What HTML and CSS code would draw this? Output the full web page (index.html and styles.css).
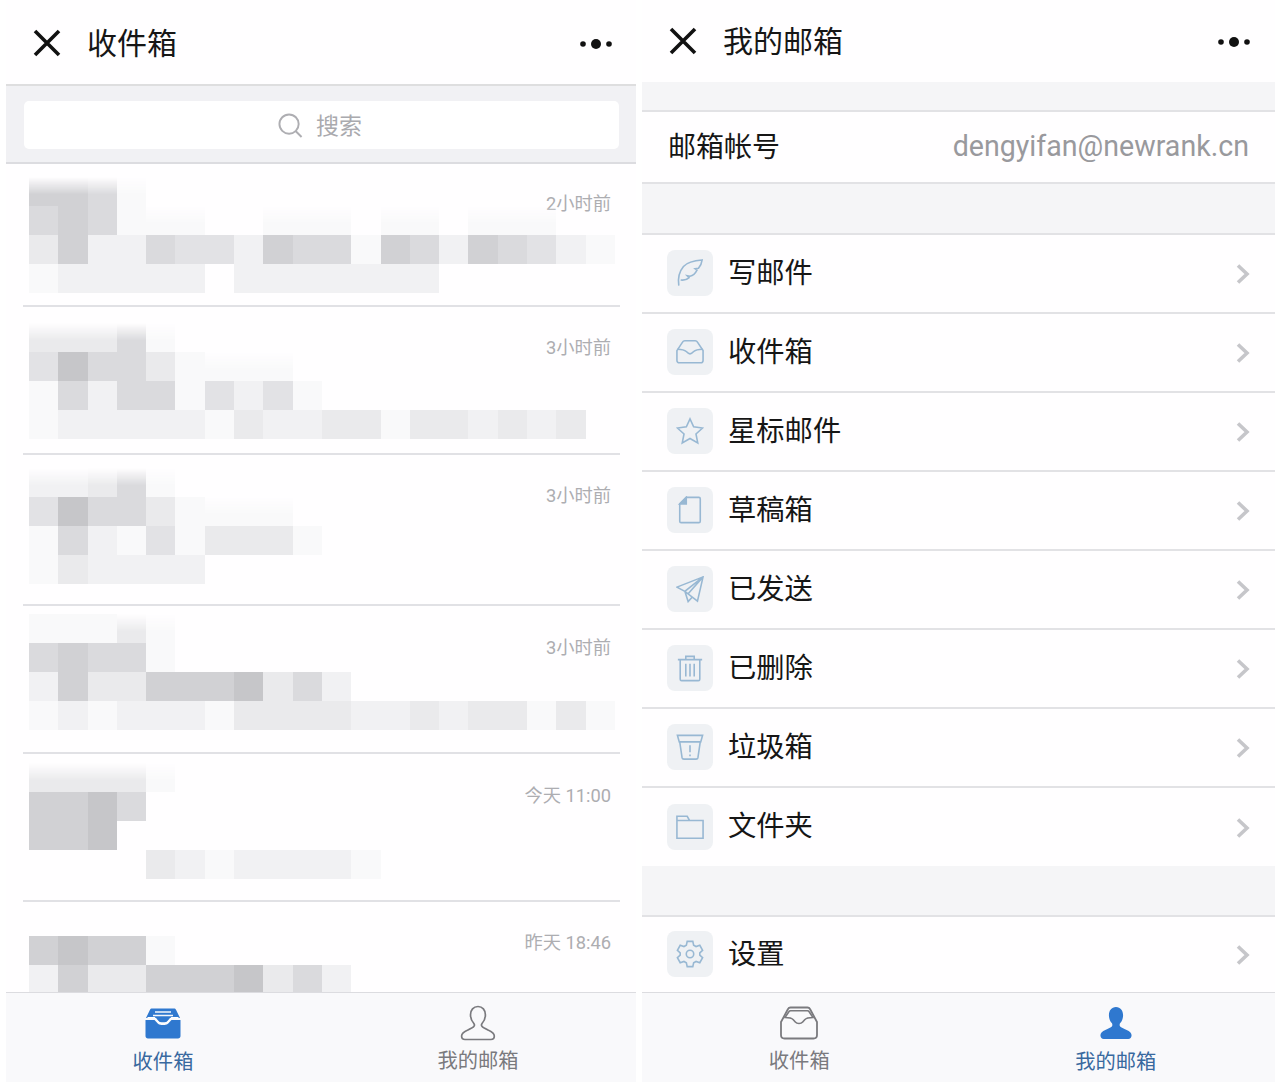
FILE: index.html
```html
<!DOCTYPE html>
<html lang="zh-CN">
<head>
<meta charset="utf-8">
<title>邮箱</title>
<link rel="stylesheet" href="styles.css">
</head>
<body>
<svg class="defs" width="0" height="0" aria-hidden="true">
  <symbol id="close" viewBox="0 0 28 28"><path d="M2 2 26 26M26 2 2 26" fill="none" stroke="currentColor" stroke-width="3.600"/></symbol>
  <symbol id="dots" viewBox="0 0 32 12"><circle cx="3" cy="6" r="2.800"/><circle cx="16" cy="6" r="5"/><circle cx="29" cy="6" r="2.800"/></symbol>
  <symbol id="chev" viewBox="0 0 14 20"><path d="M2 1.500 11 10 2 18.500" fill="none" stroke="#c6c6ca" stroke-width="3.600"/></symbol>
  <symbol id="person-line" viewBox="0 0 36 36"><path d="M18 1.500c-4.600 0-7.500 3.600-7.500 8.300 0 3.400 1.300 6.300 3.200 8.400.8 1 .9 2.400.1 3.300-.8 1-3.600 2.300-6.500 3.700-3.300 1.500-5.700 3-5.700 5.800 0 2.200 1.300 3.500 3.400 3.500h25.900c2.100 0 3.400-1.300 3.400-3.500 0-2.800-2.400-4.300-5.700-5.800-2.900-1.400-5.700-2.700-6.500-3.700-.8-.9-.7-2.300.1-3.300 1.900-2.100 3.200-5 3.200-8.400 0-4.700-2.900-8.300-7.400-8.300z" fill="none" stroke="currentColor" stroke-width="1.700"/></symbol>
  <symbol id="person-fill" viewBox="0 0 36 36"><path d="M18 1c-4.800 0-7.500 3.800-7.500 8.800 0 3.400 1.200 6.300 3 8.300.8 1 .9 2.700.1 3.600-.8 1-3.800 2.300-6.900 3.700C3.500 26.900 1.500 28.600 1.500 31c0 2.400 1.500 4 3.500 4h26c2 0 3.500-1.600 3.500-4 0-2.400-2-4.100-5.200-5.600-3.100-1.400-6.100-2.700-6.900-3.700-.8-.9-.7-2.600.1-3.600 1.800-2 3-4.900 3-8.300C25.500 4.800 22.800 1 18 1z" fill="currentColor"/></symbol>
  <symbol id="inbox-line" viewBox="0 0 40 34"><path d="M2 16 9 3c.5-1 1.300-1.500 2.500-1.500h17c1.200 0 2 .5 2.500 1.500l7 13v13c0 2-1.300 3.500-3.500 3.500h-29C3.300 32.500 2 31 2 29z" fill="none" stroke="currentColor" stroke-width="1.800"/><path d="M6 11.500 10 5.500c.3-.5.8-.8 1.500-.8h17c.7 0 1.200.3 1.500.8l4 6c-3.700 0-6.800.5-8.300 2.200l-2 2.300c-.9 1-2.100 1.500-3.700 1.500s-2.800-.5-3.700-1.500l-2-2.300C12.800 12 9.700 11.500 6 11.500z" fill="none" stroke="currentColor" stroke-width="1.600"/></symbol>
  <symbol id="inbox-fill" viewBox="0 0 36 32"><path d="M7 1.500h22c1 0 1.600.4 2 1.200L35 11H25l-3 3.600c-.6.700-1.500 1-2.500 1h-3c-1 0-1.900-.3-2.500-1L11 11H1l4-8.300C5.400 1.900 6 1.500 7 1.500z" fill="currentColor"/><path d="M10 5h16M8 8.500h20" stroke="#f3f6fb" stroke-width="1.500"/><path d="M2.500 10.500h7l3 3.800c1 1.200 2.300 1.700 4 1.700h3c1.700 0 3-.5 4-1.700l3-3.800h7" fill="none" stroke="#fff" stroke-width="1.200"/><path d="M.5 13h9l3 3.300c1 1.100 2.300 1.700 4 1.700h3c1.700 0 3-.6 4-1.700l3-3.300h9v16c0 1.600-1 2.500-2.500 2.500H3C1.500 31.500.5 30.600.5 29z" fill="currentColor"/></symbol>
</svg>
<main class="screens">
  <section class="panel panel-inbox">
    <header class="top top-inbox">
      <svg class="close"><use href="#close"/></svg>
      <h1 class="title">收件箱</h1>
      <svg class="dots"><use href="#dots"/></svg>
    </header>
    <div class="searchband">
      <div class="searchbox">
        <svg class="searchicon" viewBox="0 0 26 26"><circle cx="11.500" cy="11.500" r="10" fill="none" stroke="#aeaeb2" stroke-width="2"/><path d="M18.500 19 24.500 25" stroke="#aeaeb2" stroke-width="2" fill="none"/></svg>
        <span class="searchtext">搜索</span>
      </div>
    </div>
    <div class="list">
      <article class="item i1">
        <div class="mosaic">
          <i class="s6 t"></i><i class="s6 t"></i><i class="s5 t"></i><i class="s1 t"></i><i></i><i></i><i></i><i></i><i></i><i></i><i></i><i></i><i></i><i></i><i></i><i></i><i></i><i></i><i></i><i></i>
          <i class="s5"></i><i class="s6"></i><i class="s5"></i><i class="s1"></i><i class="s1 t"></i><i class="s1 t"></i><i></i><i></i><i class="s1 t"></i><i class="s1 t"></i><i class="s1 t"></i><i></i><i class="s1 t"></i><i class="s1 t"></i><i></i><i class="s1 t"></i><i class="s1 t"></i><i class="s1 t"></i><i></i><i></i>
          <i class="s3"></i><i class="s6"></i><i class="s2"></i><i class="s2"></i><i class="s5"></i><i class="s4"></i><i class="s4"></i><i class="s2"></i><i class="s6"></i><i class="s5"></i><i class="s5"></i><i class="s1"></i><i class="s6"></i><i class="s5"></i><i class="s2"></i><i class="s6"></i><i class="s5"></i><i class="s4"></i><i class="s2"></i><i class="s1"></i>
          <i class="s1"></i><i class="s2"></i><i class="s2"></i><i class="s2"></i><i class="s2"></i><i class="s2"></i><i></i><i class="s2"></i><i class="s2"></i><i class="s2"></i><i class="s2"></i><i class="s2"></i><i class="s2"></i><i class="s2"></i>
        </div>
        <time class="time">2小时前</time>
      </article>
      <article class="item i2">
        <div class="mosaic">
          <i class="s3 t"></i><i class="s3 t"></i><i class="s3 t"></i><i class="s5 t"></i><i class="s1 t"></i><i></i><i></i><i></i><i></i><i></i><i></i><i></i><i></i><i></i><i></i><i></i><i></i><i></i><i></i><i></i>
          <i class="s4"></i><i class="s7"></i><i class="s5"></i><i class="s5"></i><i class="s3"></i><i class="s1"></i><i class="s1 t"></i><i class="s1 t"></i><i class="s1 t"></i><i></i><i></i><i></i><i></i><i></i><i></i><i></i><i></i><i></i><i></i><i></i>
          <i class="s1"></i><i class="s5"></i><i class="s2"></i><i class="s5"></i><i class="s5"></i><i class="s1"></i><i class="s4"></i><i class="s2"></i><i class="s4"></i><i class="s1"></i><i></i><i></i><i></i><i></i><i></i><i></i><i></i><i></i><i></i><i></i>
          <i class="s1"></i><i class="s2"></i><i class="s2"></i><i class="s2"></i><i class="s2"></i><i class="s2"></i><i class="s1"></i><i class="s3"></i><i class="s2"></i><i class="s2"></i><i class="s3"></i><i class="s3"></i><i class="s1"></i><i class="s3"></i><i class="s3"></i><i class="s2"></i><i class="s3"></i><i class="s2"></i><i class="s3"></i>
        </div>
        <time class="time">3小时前</time>
      </article>
      <article class="item i3">
        <div class="mosaic">
          <i class="s2 t"></i><i class="s2 t"></i><i class="s3 t"></i><i class="s5 t"></i><i class="s1 t"></i><i></i><i></i><i></i><i></i><i></i><i></i><i></i><i></i><i></i><i></i><i></i><i></i><i></i><i></i><i></i>
          <i class="s4"></i><i class="s7"></i><i class="s5"></i><i class="s5"></i><i class="s3"></i><i class="s1"></i><i class="s1 t"></i><i class="s1 t"></i><i class="s1 t"></i><i></i><i></i><i></i><i></i><i></i><i></i><i></i><i></i><i></i><i></i><i></i>
          <i class="s1"></i><i class="s5"></i><i class="s2"></i><i class="s1"></i><i class="s4"></i><i class="s1"></i><i class="s3"></i><i class="s3"></i><i class="s3"></i><i class="s1"></i><i></i><i></i><i></i><i></i><i></i><i></i><i></i><i></i><i></i><i></i>
          <i class="s1"></i><i class="s3"></i><i class="s2"></i><i class="s2"></i><i class="s2"></i><i class="s2"></i>
        </div>
        <time class="time">3小时前</time>
      </article>
      <article class="item i4">
        <div class="mosaic">
          <i class="s1"></i><i class="s1"></i><i class="s1"></i><i class="s3 t"></i><i class="s1 t"></i><i></i><i></i><i></i><i></i><i></i><i></i><i></i><i></i><i></i><i></i><i></i><i></i><i></i><i></i><i></i>
          <i class="s5"></i><i class="s6"></i><i class="s5"></i><i class="s5"></i><i class="s1"></i><i></i><i></i><i></i><i></i><i></i><i></i><i></i><i></i><i></i><i></i><i></i><i></i><i></i><i></i><i></i>
          <i class="s2"></i><i class="s6"></i><i class="s3"></i><i class="s3"></i><i class="s6"></i><i class="s6"></i><i class="s6"></i><i class="s7"></i><i class="s3"></i><i class="s5"></i><i class="s2"></i><i></i><i></i><i></i><i></i><i></i><i></i><i></i><i></i><i></i>
          <i class="s1"></i><i class="s2"></i><i class="s1"></i><i class="s2"></i><i class="s2"></i><i class="s2"></i><i class="s1"></i><i class="s3"></i><i class="s3"></i><i class="s3"></i><i class="s3"></i><i class="s2"></i><i class="s2"></i><i class="s3"></i><i class="s2"></i><i class="s3"></i><i class="s3"></i><i class="s1"></i><i class="s3"></i><i class="s1"></i>
        </div>
        <time class="time">3小时前</time>
      </article>
      <article class="item i5">
        <div class="mosaic">
          <i class="s3 t"></i><i class="s3 t"></i><i class="s3 t"></i><i class="s3 t"></i><i class="s1 t"></i><i></i><i></i><i></i><i></i><i></i><i></i><i></i><i></i><i></i><i></i><i></i><i></i><i></i><i></i><i></i>
          <i class="s6"></i><i class="s6"></i><i class="s7"></i><i class="s5"></i><i></i><i></i><i></i><i></i><i></i><i></i><i></i><i></i><i></i><i></i><i></i><i></i><i></i><i></i><i></i><i></i>
          <i class="s6"></i><i class="s6"></i><i class="s7"></i><i></i><i></i><i></i><i></i><i></i><i></i><i></i><i></i><i></i><i></i><i></i><i></i><i></i><i></i><i></i><i></i><i></i>
          <i></i><i></i><i></i><i></i><i class="s3"></i><i class="s2"></i><i class="s1"></i><i class="s2"></i><i class="s2"></i><i class="s2"></i><i class="s2"></i><i class="s1"></i>
        </div>
        <time class="time">今天 11:00</time>
      </article>
      <article class="item i6">
        <div class="mosaic">
          <i class="s6"></i><i class="s7"></i><i class="s6"></i><i class="s6"></i><i class="s1"></i><i></i><i></i><i></i><i></i><i></i><i></i><i></i><i></i><i></i><i></i><i></i><i></i><i></i><i></i><i></i>
          <i class="s2"></i><i class="s6"></i><i class="s3"></i><i class="s3"></i><i class="s6"></i><i class="s6"></i><i class="s6"></i><i class="s7"></i><i class="s3"></i><i class="s5"></i><i class="s2"></i>
        </div>
        <time class="time">昨天 18:46</time>
      </article>
    </div>
    <nav class="tabs">
      <a class="tab tab-on"><svg class="tabicon inbox-f"><use href="#inbox-fill"/></svg><span>收件箱</span></a>
      <a class="tab"><svg class="tabicon person"><use href="#person-line"/></svg><span>我的邮箱</span></a>
    </nav>
  </section>

  <section class="panel panel-mine">
    <header class="top top-mine">
      <svg class="close"><use href="#close"/></svg>
      <h1 class="title">我的邮箱</h1>
      <svg class="dots"><use href="#dots"/></svg>
    </header>
    <div class="band band-a"></div>
    <div class="account">
      <span class="label">邮箱帐号</span>
      <span class="addr">dengyifan@newrank.cn</span>
    </div>
    <div class="band band-b"></div>
    <ul class="menu">
      <li class="row"><span class="ibox"><svg class="gl" viewBox="0 0 30 30"><path d="M3 28.500C2 22 3 14 8 8 12 3.500 20 1.500 28 1 27.500 5 26 8 24 10L20.500 10.500 22.500 12C20.500 16 18 18 15 18.500L12 18 14 20C11.500 22.500 8.500 23 5 22.500"/></svg></span><span class="name">写邮件</span><svg class="chev"><use href="#chev"/></svg></li>
      <li class="row"><span class="ibox"><svg class="gl" viewBox="0 0 30 30"><path d="M1 13.500 7 4.500C7.500 3.500 8.500 3 9.500 3H20.500C21.500 3 22.500 3.500 23 4.500L29 13.500V24C29 25.500 28 26.500 26.500 26.500H3.500C2 26.500 1 25.500 1 24Z"/><path d="M1.500 12C6 12 9 12.500 11 14.500 12.500 16 13.500 17 15 17S17.500 16 19 14.500C21 12.500 24 12 28.500 12"/></svg></span><span class="name">收件箱</span><svg class="chev"><use href="#chev"/></svg></li>
      <li class="row"><span class="ibox"><svg class="gl" viewBox="0 0 30 30"><path d="M15 2 18.900 10.500 28.500 11.800 21.400 18.200 23.300 27.800 15 23 6.700 27.800 8.600 18.200 1.500 11.800 11.100 10.500Z"/></svg></span><span class="name">星标邮件</span><svg class="chev"><use href="#chev"/></svg></li>
      <li class="row"><span class="ibox"><svg class="gl" viewBox="0 0 30 30"><path d="M11 1.500H24.500C25.500 1.500 26 2 26 3V27C26 28 25.500 28.500 24.500 28.500H5.500C4.500 28.500 4 28 4 27V8.500Z"/><path class="glf" d="M11 1.500V8.500H4Z"/></svg></span><span class="name">草稿箱</span><svg class="chev"><use href="#chev"/></svg></li>
      <li class="row"><span class="ibox"><svg class="gl" viewBox="0 0 30 30"><path d="M29 2 1 13 9.500 17.500 23 28ZM29 2 9.500 17.500 13 28.500 17.500 23.500M29 2 13 20"/></svg></span><span class="name">已发送</span><svg class="chev"><use href="#chev"/></svg></li>
      <li class="row"><span class="ibox"><svg class="gl" viewBox="0 0 30 30"><path d="M2 6H28M10.500 6V2.500H19.500V6M4.500 6V27C4.500 28 5 28.500 6 28.500H24C25 28.500 25.500 28 25.500 27V6M10.500 10.500V24M15 10.500V24M19.500 10.500V24"/></svg></span><span class="name">已删除</span><svg class="chev"><use href="#chev"/></svg></li>
      <li class="row"><span class="ibox"><svg class="gl" viewBox="0 0 30 30"><path d="M1.500 2.500H28.500L26.500 9.500H3.500ZM4 9.500 6.500 26.500C6.700 27.500 7.300 28 8.500 28H21.500C22.700 28 23.300 27.500 23.500 26.500L26 9.500M15 13V20.500M15 23V25"/></svg></span><span class="name">垃圾箱</span><svg class="chev"><use href="#chev"/></svg></li>
      <li class="row"><span class="ibox"><svg class="gl" viewBox="0 0 30 30"><path d="M1 3.500H12L14.500 8H29V27H1ZM1 8H14.500"/></svg></span><span class="name">文件夹</span><svg class="chev"><use href="#chev"/></svg></li>
    </ul>
    <div class="band band-b"></div>
    <div class="row row-last"><span class="ibox"><svg class="gl" viewBox="0 0 30 30"><path d="M12 1.500H18L18.900 5.500 21.500 7 25.500 5.700 28.500 11 25.500 13.700V16.300L28.500 19 25.500 24.300 21.500 23 18.900 24.500 18 28.500H12L11.100 24.500 8.500 23 4.500 24.300 1.500 19 4.500 16.300V13.700L1.500 11 4.500 5.700 8.500 7 11.100 5.500Z"/><circle cx="15" cy="15" r="4"/></svg></span><span class="name">设置</span><svg class="chev"><use href="#chev"/></svg></div>
    <nav class="tabs">
      <a class="tab"><svg class="tabicon inbox-l"><use href="#inbox-line"/></svg><span>收件箱</span></a>
      <a class="tab tab-on"><svg class="tabicon person-f"><use href="#person-fill"/></svg><span>我的邮箱</span></a>
    </nav>
  </section>
</main>
</body>
</html>
```

FILE: styles.css
```css
* { box-sizing: border-box; }
html, body { margin: 0; padding: 0; background: #fff; }
body {
  width: 1280px;
  height: 1088px;
  overflow: hidden;
  font-family: "Noto Sans CJK SC", "Noto Sans", sans-serif;
  color: #141414;
}
.defs { display: block; width: 0; height: 0; }
.screens {
  display: flex;
  gap: 6px;
  height: 1082px;
  padding-left: 6px;
}
.panel {
  display: flex;
  flex-direction: column;
  overflow: hidden;
  background: #fffeff;
}
.panel-inbox { width: 630px; }
.panel-mine { width: 633px; }

.top { display: flex; align-items: center; flex: none; }
.top-inbox { height: 84px; padding: 2px 24px 0 27px; }
.top-mine { height: 82px; padding: 0 25px 0 27px; }
.close { width: 28px; height: 28px; color: #111; flex: none; }
.title {
  margin: 0 0 4px 26px;
  font-size: 30px;
  font-weight: 400;
  line-height: 40px;
  flex: 1;
  color: #161616;
}
.top-mine .title { margin-left: 26px; }
.dots { width: 32px; height: 12px; fill: #111; flex: none; margin-top: 1px; }

.searchband {
  flex: none;
  height: 80px;
  padding: 15px 17px 0 18px;
  background: #f1f1f4;
  border-top: 2px solid #dededf;
  border-bottom: 2px solid #dcdce0;
}
.searchbox {
  height: 48px;
  background: #fff;
  border-radius: 5px;
  display: flex;
  align-items: center;
  justify-content: center;
  gap: 13px;
  color: #aaaaae;
  font-size: 23px;
  padding-right: 3px;
}
.searchtext { margin-bottom: 2px; }
.searchicon { width: 25px; height: 25px; flex: none; }

.list { flex: 1; min-height: 0; overflow: hidden; }
.item {
  margin: 0 16px 0 17px;
  display: grid;
  border-bottom: 2px solid #e1e1e5;
  overflow: hidden;
}
.i1 { height: 143px; }
.i2 { height: 148px; }
.i3 { height: 151px; }
.i4 { height: 148px; }
.i5 { height: 148px; }
.i6 { height: 120px; border-bottom: 0; }
.mosaic, .time { grid-area: 1 / 1; }
.mosaic {
  display: grid;
  grid-template-columns: repeat(20, 29.3px);
  grid-auto-rows: 29.100px;
  margin-left: 6px;
  align-self: start;
}
.i1 .mosaic { margin-top: 13px; }
.i2 .mosaic { margin-top: 16px; }
.i3 .mosaic { margin-top: 13px; }
.i4 .mosaic { margin-top: 8px; }
.i5 .mosaic { margin-top: 9px; }
.i6 .mosaic { margin-top: 34px; }
.time {
  justify-self: end;
  align-self: start;
  font-size: 18.300px;
  line-height: 24px;
  color: #adadb1;
  padding-right: 9px;
  font-family: "Roboto", "Noto Sans CJK SC", sans-serif;
  font-weight: 400;
}
.i1 .time { margin-top: 28px; }
.i2 .time { margin-top: 29px; }
.i3 .time { margin-top: 29px; }
.i4 .time { margin-top: 30px; }
.i5 .time { margin-top: 30px; }
.i6 .time { margin-top: 29px; }

.s1 { background: #f9f9fa; }
.s2 { background: #f1f1f3; }
.s3 { background: #eaeaec; }
.s4 { background: #e2e2e5; }
.s5 { background: #dadadd; }
.s6 { background: #d1d1d4; }
.s7 { background: #c6c6c9; }
.t { mask-image: linear-gradient(to bottom, transparent, #000 60%); }

.tabs {
  flex: none;
  height: 90px;
  display: flex;
  background: #f9f9fb;
  border-top: 1px solid #dcdce0;
}
.tab {
  flex: 1;
  display: flex;
  flex-direction: column;
  align-items: center;
  font-size: 20.300px;
  line-height: 28px;
  color: #7a7a7e;
}
.tab span { margin-top: 6px; }
.tab-on { color: #39699f; }
.tabicon { flex: none; }
.inbox-f { width: 36px; height: 32px; margin-top: 14px; margin-bottom: 1px; color: #2f78cf; }
.person { width: 36px; height: 36px; margin-top: 12px; margin-bottom: -2px; }
.inbox-l { width: 40px; height: 34px; margin-top: 13px; margin-bottom: -1px; }
.person-f { width: 34px; height: 34px; margin-top: 13px; color: #2f78cf; }

.panel-inbox .tab { padding-right: 1px; }
.panel-mine .tab { padding-right: 2px; }

.band { flex: none; background: #f5f5f7; border-bottom: 2px solid #e2e2e5; }
.band-a { height: 30px; }
.band-b { height: 51px; }
.account {
  flex: none;
  height: 72px;
  padding: 0 26px 0 26px;
  display: flex;
  align-items: center;
  justify-content: space-between;
  border-bottom: 2px solid #e2e2e5;
}
.label { font-size: 28px; color: #161616; margin-bottom: 4px; }
.addr {
  font-family: "Roboto", sans-serif;
  font-size: 28.600px;
  color: #99999d;
  margin-bottom: 2px;
}
.menu { list-style: none; margin: 0; padding: 0; flex: none; }
.row {
  height: 79px;
  display: flex;
  align-items: center;
  padding: 0 25px 0 25px;
  border-bottom: 2px solid #e2e2e5;
}
.menu .row:last-child { height: 78px; border-bottom: 0; }
.row-last { flex: none; height: 75px; border-bottom: 0; }
.ibox {
  width: 46px;
  height: 46px;
  margin-bottom: 1px;
  border-radius: 8px;
  background: #eff1f4;
  display: flex;
  align-items: center;
  justify-content: center;
  flex: none;
}
.gl {
  width: 28px;
  height: 28px;
  fill: none;
  stroke: #98b8d3;
  stroke-width: 1.700;
}
.glf { fill: #98b8d3; }
.name {
  margin: 0 0 6px 15px;
  font-size: 28.300px;
  line-height: 40px;
  flex: 1;
  color: #161616;
}
.chev { width: 14px; height: 20px; flex: none; margin-top: 1px; }
```
